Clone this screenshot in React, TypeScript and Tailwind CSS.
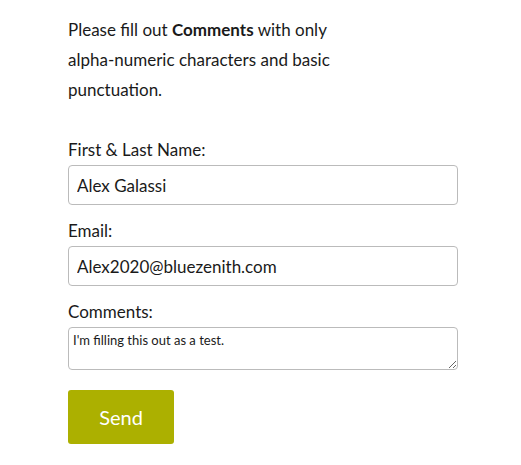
export default function App() {
  return (
    <div className="min-h-screen bg-white text-[#1a1a1a] font-['Lato',sans-serif]">
      <form className="w-[390px] ml-[68px] pt-[15px]" onSubmit={(e) => e.preventDefault()}>
        <p className="text-[17px] leading-[30px] w-[280px]">
          Please fill out <strong className="font-bold">Comments</strong> with only alpha-numeric characters and basic punctuation.
        </p>

        <label className="block mt-[33px] text-[17px] leading-[24px]">First &amp; Last Name:</label>
        <input
          defaultValue="Alex Galassi"
          className="mt-[3px] block w-full h-[40px] px-[8px] text-[17px] border border-[#bbb] rounded-[4px] outline-none"
        />

        <label className="block mt-[14px] text-[17px] leading-[24px]">Email:</label>
        <input
          defaultValue="Alex2020@bluezenith.com"
          className="mt-[3px] block w-full h-[40px] px-[8px] text-[17px] border border-[#bbb] rounded-[4px] outline-none"
        />

        <label className="block mt-[14px] text-[17px] leading-[24px]">Comments:</label>
        <textarea
          defaultValue="I'm filling this out as a test."
          className="mt-[3px] block w-full h-[43px] px-[4px] py-[4px] text-[13px] leading-[16px] border border-[#bbb] rounded-[4px] outline-none resize-y"
        />

        <button
          type="submit"
          className="mt-[20px] w-[106px] h-[54px] bg-[#acb000] text-white text-[20px] rounded-[3px]"
        >
          Send
        </button>
      </form>
    </div>
  )
}
